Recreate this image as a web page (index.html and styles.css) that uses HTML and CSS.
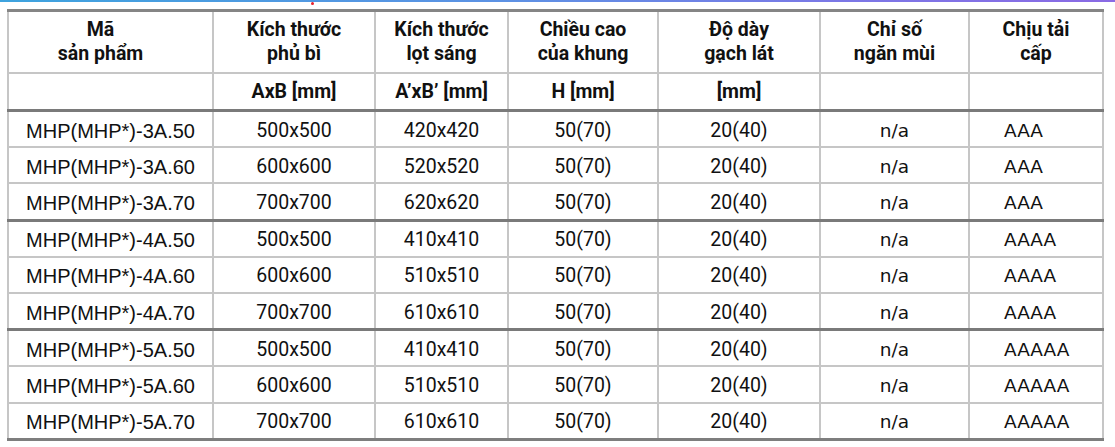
FILE: index.html
```html
<!DOCTYPE html>
<html lang="vi">
<head>
<meta charset="utf-8">
<title>Bảng thông số</title>
<link rel="stylesheet" href="styles.css">
</head>
<body>
<div class="topbar"></div>
<span class="dot"></span>
<table class="spec">
  <colgroup>
    <col class="c1"><col class="c2"><col class="c3"><col class="c4"><col class="c5"><col class="c6"><col class="c7">
  </colgroup>
  <thead>
    <tr class="h1">
      <th class="first">Mã<br>sản phẩm</th>
      <th>Kích thước<br>phủ bì</th>
      <th>Kích thước<br>lọt sáng</th>
      <th>Chiều cao<br>của khung</th>
      <th>Độ dày<br>gạch lát</th>
      <th>Chỉ số<br>ngăn mùi</th>
      <th>Chịu tải<br>cấp</th>
    </tr>
    <tr class="h2">
      <th></th>
      <th>AxB [mm]</th>
      <th>A’xB’ [mm]</th>
      <th>H [mm]</th>
      <th>[mm]</th>
      <th></th>
      <th></th>
    </tr>
  </thead>
  <tbody>
    <tr><td class="code">MHP(MHP*)-3A.50</td><td class="num">500x500</td><td class="num">420x420</td><td class="num">50(70)</td><td class="num">20(40)</td><td class="dv">n/a</td><td class="dv load">AAA</td></tr>
    <tr><td class="code">MHP(MHP*)-3A.60</td><td class="num">600x600</td><td class="num">520x520</td><td class="num">50(70)</td><td class="num">20(40)</td><td class="dv">n/a</td><td class="dv load">AAA</td></tr>
    <tr><td class="code">MHP(MHP*)-3A.70</td><td class="num">700x700</td><td class="num">620x620</td><td class="num">50(70)</td><td class="num">20(40)</td><td class="dv">n/a</td><td class="dv load">AAA</td></tr>
  </tbody>
  <tbody>
    <tr><td class="code">MHP(MHP*)-4A.50</td><td class="num">500x500</td><td class="num">410x410</td><td class="num">50(70)</td><td class="num">20(40)</td><td class="dv">n/a</td><td class="dv load">AAAA</td></tr>
    <tr><td class="code">MHP(MHP*)-4A.60</td><td class="num">600x600</td><td class="num">510x510</td><td class="num">50(70)</td><td class="num">20(40)</td><td class="dv">n/a</td><td class="dv load">AAAA</td></tr>
    <tr><td class="code">MHP(MHP*)-4A.70</td><td class="num">700x700</td><td class="num">610x610</td><td class="num">50(70)</td><td class="num">20(40)</td><td class="dv">n/a</td><td class="dv load">AAAA</td></tr>
  </tbody>
  <tbody>
    <tr><td class="code">MHP(MHP*)-5A.50</td><td class="num">500x500</td><td class="num">410x410</td><td class="num">50(70)</td><td class="num">20(40)</td><td class="dv">n/a</td><td class="dv load">AAAAA</td></tr>
    <tr><td class="code">MHP(MHP*)-5A.60</td><td class="num">600x600</td><td class="num">510x510</td><td class="num">50(70)</td><td class="num">20(40)</td><td class="dv">n/a</td><td class="dv load">AAAAA</td></tr>
    <tr><td class="code">MHP(MHP*)-5A.70</td><td class="num">700x700</td><td class="num">610x610</td><td class="num">50(70)</td><td class="num">20(40)</td><td class="dv">n/a</td><td class="dv load">AAAAA</td></tr>
  </tbody>
</table>
</body>
</html>
```

FILE: styles.css
```css
html, body {
  margin: 0;
  padding: 0;
  background: #ffffff;
}

body {
  position: relative;
  color: #111111;
  font-family: Roboto, "Liberation Sans", sans-serif;
}

.topbar {
  height: 2px;
  background: linear-gradient(90deg, #3ea3de 0%, #5d92e4 45%, #7b78e6 75%, #8a6ae4 100%);
}

.dot {
  position: absolute;
  left: 311px;
  top: 2px;
  width: 3px;
  height: 3px;
  border-radius: 50%;
  background: #e8202a;
}

.spec {
  margin: 7px 0 0 7px;
  width: 1097px;
  table-layout: fixed;
  border-collapse: collapse;
  border-top: 3px solid #858585;
  border-left: 2px solid #c2c2c2;
  border-right: 2px solid #c2c2c2;
  border-bottom: 3px solid #7e7e7e;
}

.c1 { width: 205px; }
.c2 { width: 162px; }
.c3 { width: 133px; }
.c4 { width: 150px; }
.c5 { width: 162px; }
.c6 { width: 149px; }
.c7 { width: 134px; }

.spec th,
.spec td {
  border: 2px solid #c6c6c6;
  padding: 0 4px;
  text-align: center;
  vertical-align: middle;
}

.spec th {
  font-family: Roboto, sans-serif;
  font-weight: 700;
  font-size: 19.5px;
  line-height: 24px;
  color: #111111;
}

.h1 th {
  height: 60px;
}

.h1 th.first {
  padding-right: 24px;
}

.h2 th {
  height: 35px;
}

.spec tbody {
  border-top: 3px solid #7a7a7a;
}

.spec td {
  height: 31.2px;
  padding-top: 3px;
  padding-bottom: 0;
  font-size: 19.5px;
  line-height: 22px;
  color: #111111;
}

.spec td.code {
  font-family: "Liberation Sans", Arial, sans-serif;
  font-size: 20px;
}

.spec td.num {
  font-family: Roboto, sans-serif;
}

.spec td.dv {
  font-family: "DejaVu Sans", Verdana, sans-serif;
  font-size: 18.5px;
}

.spec td.load {
  text-align: left;
  padding-left: 34px;
}
```
